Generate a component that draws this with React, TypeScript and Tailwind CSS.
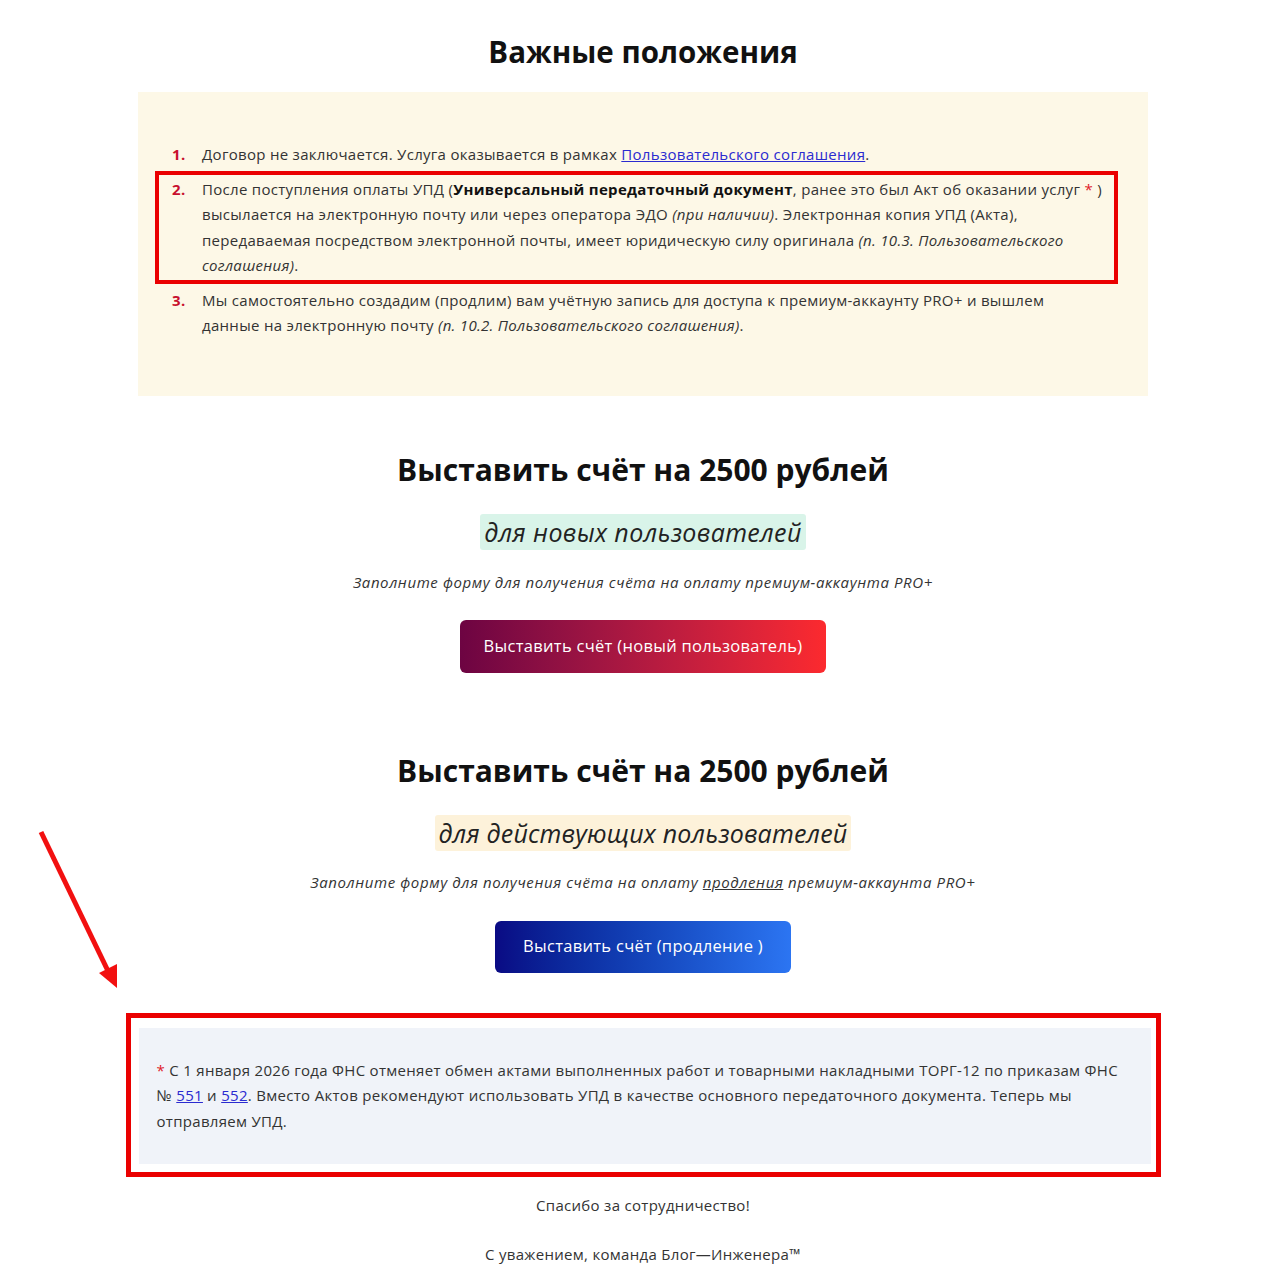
import React from "react";

const font = { fontFamily: '"Open Sans", "Liberation Sans", sans-serif' };

function Num({ n }: { n: number }) {
  return (
    <span className="w-[30px] shrink-0 font-bold text-[#c8102e]">{n}.</span>
  );
}

export default function App() {
  return (
    <div
      className="relative min-h-[1280px] bg-white pl-[16px] text-[#333]"
      style={font}
    >
      {/* pointer arrow */}
      <svg
        className="absolute left-[30px] top-[825px]"
        width="100"
        height="170"
        viewBox="0 0 100 170"
      >
        <line x1="11" y1="7" x2="78" y2="146" stroke="#f21010" strokeWidth="5" />
        <polygon points="87,163 69,148 87,139" fill="#f21010" />
      </svg>

      <div className="mx-auto flex w-[1010px] flex-col items-center pt-[32px] text-[15px] tracking-[0.3px]">
        <h1 className="text-[29.5px] font-bold leading-[40px] tracking-normal text-[#111]">
          Важные положения
        </h1>

        {/* key points */}
        <div className="mt-[20px] w-full bg-[#fdf8e7] pb-[57px] pl-[34px] pr-[30px] pt-[46px] leading-[25.5px]">
          <div className="flex py-[4px]">
            <Num n={1} />
            <p>
              Договор не заключается. Услуга оказывается в рамках{" "}
              <a className="text-[#2b2bd0] underline">Пользовательского соглашения</a>.
            </p>
          </div>
          <div className="relative flex py-[5px]">
            <div className="absolute left-[-17px] right-[0px] top-[-1px] bottom-[0px] border-[4px] border-[#ea0000]" />
            <Num n={2} />
            <p>
              После поступления оплаты УПД (
              <b className="text-[#111]">Универсальный передаточный документ</b>, ранее это был Акт об
              оказании услуг <span className="text-[#e0202a]">*</span> )<br />
              высылается на электронную почту или через оператора ЭДО <i>(при наличии)</i>. Электронная
              копия УПД (Акта),
              <br />
              передаваемая посредством электронной почты, имеет юридическую силу оригинала{" "}
              <i>(п. 10.3. Пользовательского</i>
              <br />
              <i>соглашения)</i>.
            </p>
          </div>
          <div className="flex pt-[4px]">
            <Num n={3} />
            <p>
              Мы самостоятельно создадим (продлим) вам учётную запись для доступа к премиум-аккаунту
              PRO+ и вышлем
              <br />
              данные на электронную почту <i>(п. 10.2. Пользовательского соглашения)</i>.
            </p>
          </div>
        </div>

        {/* new users */}
        <h2 className="mt-[54px] text-[30px] font-bold leading-[40px] tracking-normal text-[#111]">
          Выставить счёт на 2500 рублей
        </h2>
        <div className="mt-[24px] rounded-[3px] bg-[#d9f4e9] px-[4px] text-[25px] italic leading-[36px] tracking-[0.4px] text-[#222]">
          для новых пользователей
        </div>
        <p className="mt-[20px] italic leading-[24px] tracking-[0.6px] text-[#333]">
          Заполните форму для получения счёта на оплату премиум-аккаунта PRO+
        </p>
        <button className="mt-[26px] h-[53px] rounded-[6px] bg-gradient-to-r from-[#6d0442] to-[#fc2a2e] px-[24px] text-[16.5px] tracking-[0.3px] text-white">
          Выставить счёт (новый пользователь)
        </button>

        {/* existing users */}
        <h2 className="mt-[78px] text-[30px] font-bold leading-[40px] tracking-normal text-[#111]">
          Выставить счёт на 2500 рублей
        </h2>
        <div className="mt-[24px] rounded-[3px] bg-[#fdf2da] px-[4px] text-[25px] italic leading-[36px] tracking-[0.2px] text-[#222]">
          для действующих пользователей
        </div>
        <p className="mt-[19px] italic leading-[24px] tracking-[0.6px] text-[#333]">
          Заполните форму для получения счёта на оплату{" "}
          <span className="underline">продления</span> премиум-аккаунта PRO+
        </p>
        <button className="mt-[27px] h-[52px] rounded-[6px] bg-gradient-to-r from-[#0a0a84] to-[#2c75f2] px-[28px] text-[16.5px] tracking-[0.3px] text-white">
          Выставить счёт (продление )
        </button>

        {/* footnote */}
        <div className="mt-[40px] w-[1035px] border-[5px] border-[#ea0000] pb-[8px] pl-[8px] pr-[5px] pt-[10px]">
          <div className="bg-[#f0f3f9] pb-[30px] pl-[18px] pr-[20px] pt-[30px] leading-[25.5px]">
            <span className="text-[#e0202a]">*</span> С 1 января 2026 года ФНС отменяет обмен актами
            выполненных работ и товарными накладными ТОРГ-12 по приказам ФНС
            <br />№ <a className="text-[#2b2bd0] underline">551</a> и{" "}
            <a className="text-[#2b2bd0] underline">552</a>. Вместо Актов рекомендуют использовать УПД
            в качестве основного передаточного документа. Теперь мы
            <br />
            отправляем УПД.
          </div>
        </div>

        <p className="mt-[16px] leading-[24px]">Спасибо за сотрудничество!</p>
        <p className="mt-[25px] leading-[24px]">С уважением, команда Блог—Инженера™</p>
      </div>
    </div>
  );
}
